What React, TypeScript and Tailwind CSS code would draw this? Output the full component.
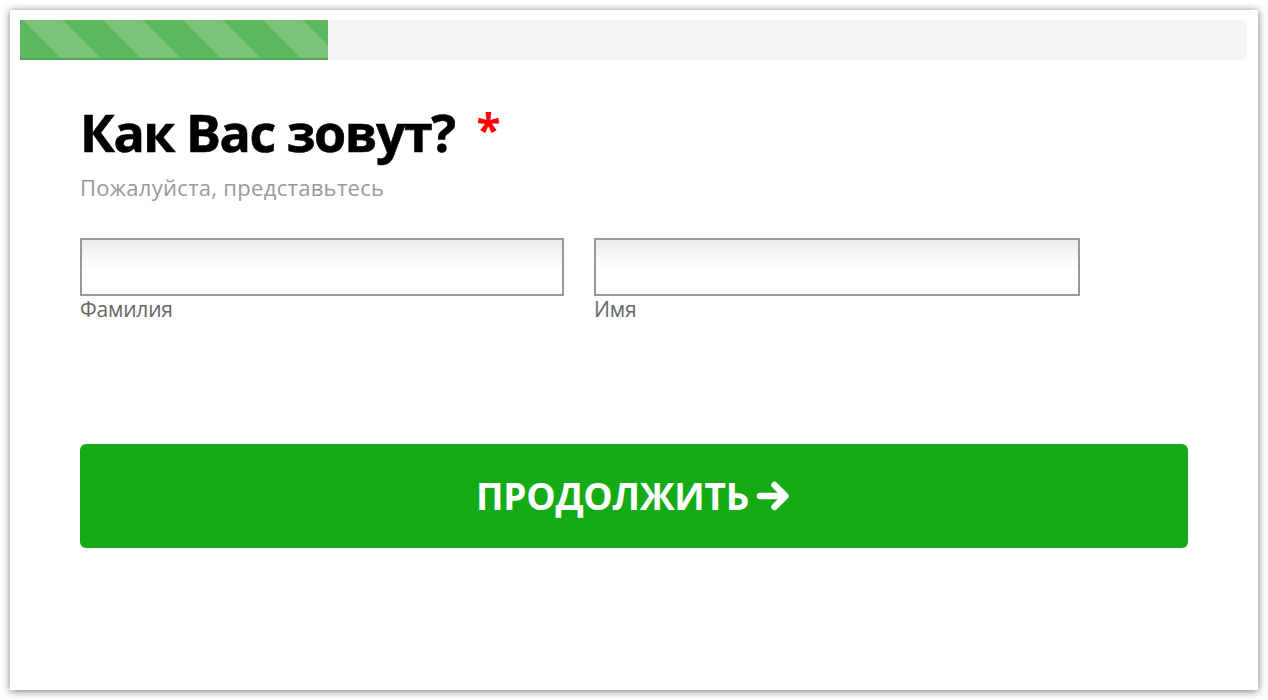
import React from "react";

function Arrow() {
  return (
    <svg width="36" height="34" viewBox="0 0 36 34" className="ml-[7px]">
      <path d="M4 17 H29 M18.5 6 L29.5 17 L18.5 28" stroke="white" strokeWidth="6.5" fill="none" strokeLinecap="round" strokeLinejoin="round" />
    </svg>
  );
}

export default function App() {
  return (
    <div className="w-[1268px] h-[700px] bg-white p-[10px] font-['Open_Sans',sans-serif]">
      <div className="w-[1248px] h-[680px] bg-white shadow-[0_1px_8px_rgba(0,0,0,0.55)] pt-[10px] px-[10px]">
        <div className="h-[40px] w-[1227px] bg-[#f4f4f4] rounded-r-[6px] overflow-hidden">
          <div className="h-full w-[308px] border-b-2 border-[#54a654] bg-[repeating-linear-gradient(45deg,#5cb85c_0px,#5cb85c_28.3px,#78c47a_28.3px,#78c47a_56.6px)]" />
        </div>
        <div className="px-[60px] pt-[42px]">
          <div className="flex items-start">
            <h1 className="text-[52px] leading-[60px] font-bold text-black tracking-[-1.5px] [-webkit-text-stroke:0.6px_black]">Как Вас зовут?</h1>
            <span className="ml-[22px] mt-[2px] text-[44px] leading-[50px] font-bold text-[#ff0000]">*</span>
          </div>
          <p className="mt-[12px] text-[22px] leading-[26px] text-[#999] tracking-[0.3px]">Пожалуйста, представьтесь</p>
          <div className="mt-[38px] flex gap-[30px]">
            <div className="w-[484px]">
              <div className="h-[58px] border-2 border-[#999] bg-[linear-gradient(to_bottom,#ececec,#ffffff_55%)]" />
              <div className="mt-[1px] text-[21px] leading-[24px] text-[#666] tracking-[-0.2px]">Фамилия</div>
            </div>
            <div className="w-[486px]">
              <div className="h-[58px] border-2 border-[#999] bg-[linear-gradient(to_bottom,#ececec,#ffffff_55%)]" />
              <div className="mt-[1px] text-[21px] leading-[24px] text-[#666] tracking-[-0.2px]">Имя</div>
            </div>
          </div>
          <button className="mt-[123px] w-[1108px] h-[104px] rounded-[6px] bg-[#15ab17] flex items-center justify-center text-white text-[37px] font-bold tracking-[-0.3px]">
            ПРОДОЛЖИТЬ
            <Arrow />
          </button>
        </div>
      </div>
    </div>
  );
}
